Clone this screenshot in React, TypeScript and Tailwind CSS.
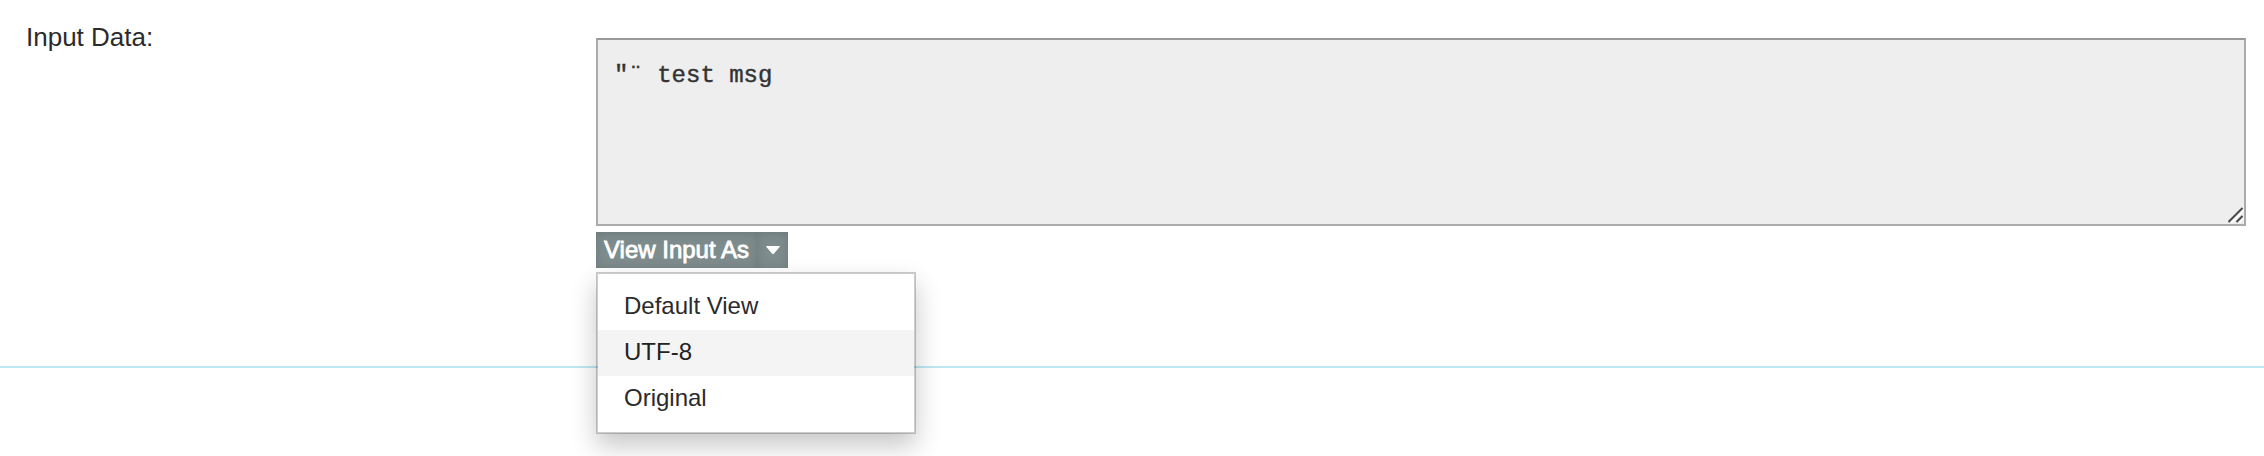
import { useState } from "react";

const views = ["Default View", "UTF-8", "Original"];

export default function App() {
  const [selected, setSelected] = useState("UTF-8");
  const [open, setOpen] = useState(true);

  return (
    <main className="min-h-screen bg-white font-['Liberation_Sans',Arial,sans-serif] text-2xl text-[#2b2b2b]">
      <section className="flex h-[368px] border-b-2 border-[#bce8f1] pr-[18px] pl-[26px]">
        <label
          htmlFor="input-data"
          className="w-[570px] shrink-0 pt-[17px] text-[26px] leading-10"
        >
          Input Data:
        </label>
        <div className="min-w-0 flex-1 pt-[38px]">
          <div className="relative">
            <textarea
              id="input-data"
              readOnly
              defaultValue={'"¨ test msg'}
              className="block h-[188px] w-full resize-none border-2 border-[#ababab] border-t-[#999999] bg-[#eeeeee] px-4 py-[18px] font-['Liberation_Mono',monospace] text-2xl leading-9 text-[#333333] outline-none [-webkit-text-stroke:0.4px_#333333]"
            />
            <svg
              aria-hidden="true"
              viewBox="0 0 16 16"
              className="pointer-events-none absolute right-[2px] bottom-[3px] size-4"
              fill="none"
            >
              <path d="M3 16 16 3M11 16l5-5" stroke="#fff" strokeWidth="1.5" />
              <path d="M0.500 15 14.500 1M8.500 15l6-6" stroke="#4a4a4a" strokeWidth="2" />
            </svg>
          </div>
          <div className="relative mt-[6px] w-fit">
            <button
              type="button"
              aria-haspopup="menu"
              aria-expanded={open}
              onClick={() => setOpen(!open)}
              className="flex h-9 items-stretch bg-[#7f8c8d] text-2xl leading-9 whitespace-nowrap text-white"
            >
              <span className="w-[161px] pl-2 text-left shadow-[inset_0_2px_10px_rgba(80,95,95,0.4)] [-webkit-text-stroke:0.8px_white]">
                View Input As
              </span>
              <span className="flex w-[31px] items-center justify-center shadow-[inset_0_2px_10px_rgba(80,95,95,0.4)]">
                <svg aria-hidden="true" viewBox="0 0 14 8" className="h-2 w-[14px]">
                  <path d="M1 0h12q1.500 0 .6 1L8 7.400q-1 1-2 0L.4 1Q-.5 0 1 0Z" fill="#fff" />
                </svg>
              </span>
            </button>
            {open && (
              <ul
                role="menu"
                className="absolute top-10 left-0 z-10 w-80 border-2 border-black/20 bg-white bg-clip-padding py-[10px] shadow-[0_12px_24px_rgba(0,0,0,0.22)]"
              >
                {views.map((view) => (
                  <li key={view} role="none">
                    <button
                      type="button"
                      role="menuitem"
                      onClick={() => setSelected(view)}
                      className={
                        view === selected
                          ? "block w-full bg-[#f4f4f4] px-[26px] pb-[2px] text-left leading-11 text-[#222222]"
                          : "block w-full px-[26px] pb-[2px] text-left leading-11"
                      }
                    >
                      {view}
                    </button>
                  </li>
                ))}
              </ul>
            )}
          </div>
        </div>
      </section>
    </main>
  );
}
